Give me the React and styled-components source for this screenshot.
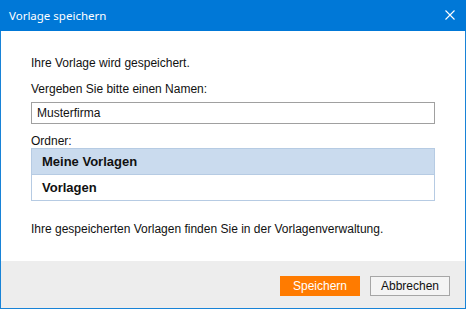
import React from 'react';
import styled, { createGlobalStyle } from 'styled-components';

const GlobalStyle = createGlobalStyle`
  html, body {
    margin: 0;
    padding: 0;
    background: #ffffff;
  }
`;

const Window = styled.div`
  width: 466px;
  height: 309px;
  box-sizing: border-box;
  border: 1px solid #1883d7;
  border-top: none;
  display: flex;
  flex-direction: column;
  font-family: 'Liberation Sans', Arial, sans-serif;
  color: #111;
`;

const TitleBar = styled.div`
  height: 31px;
  margin: 0 -1px;
  background: #0078d7;
  display: flex;
  align-items: center;
  justify-content: space-between;
  padding: 0 11px 0 9px;
`;

const Title = styled.span`
  font-family: 'Noto Sans', sans-serif;
  font-size: 11.5px;
  color: #ffffff;
`;

const CloseButton = styled.svg`
  width: 10px;
  height: 10px;
  margin-top: -2px;
`;

const Body = styled.div`
  height: 230px;
  box-sizing: border-box;
  padding: 25px 30px 0 30px;
  display: flex;
  flex-direction: column;
  background: #ffffff;
`;

const Text = styled.div`
  font-size: 12px;
  line-height: 14px;
  margin-top: ${p => p.$gap || 0}px;
`;

const Input = styled.div`
  margin-top: 6px;
  height: 22px;
  box-sizing: border-box;
  border: 1px solid #a0a0a0;
  font-size: 12px;
  display: flex;
  align-items: center;
  padding-left: 5px;
`;

const List = styled.div`
  border: 1px solid #b6cbe3;
  display: flex;
  flex-direction: column;
`;

const ListItem = styled.div`
  height: 25px;
  box-sizing: border-box;
  display: flex;
  align-items: center;
  padding-left: 10px;
  font-size: 13px;
  font-weight: bold;
  background: ${p => (p.$selected ? '#cadbee' : '#ffffff')};
  & + & {
    border-top: 1px solid #b6cbe3;
    height: 26px;
  }
`;

const Footer = styled.div`
  flex: 1;
  background: #ededed;
  display: flex;
  justify-content: flex-end;
  align-items: flex-start;
  gap: 10px;
  padding: 15px 15px 0 0;
`;

const Button = styled.button`
  width: 80px;
  height: 20px;
  box-sizing: border-box;
  padding: 0;
  font-family: 'Liberation Sans', Arial, sans-serif;
  font-size: 12px;
  border: 1px solid ${p => (p.$primary ? '#ff7b00' : '#a6a6a6')};
  background: ${p => (p.$primary ? '#ff7b00' : '#f4f4f4')};
  color: ${p => (p.$primary ? '#ffffff' : '#111')};
`;

export default function App() {
  return (
    <>
      <GlobalStyle />
      <Window>
        <TitleBar>
          <Title>Vorlage speichern</Title>
          <CloseButton viewBox="0 0 10 10">
            <path d="M0.5 0.5 L9.5 9.5 M9.5 0.5 L0.5 9.5" stroke="#ffffff" strokeWidth="1.1" fill="none" />
          </CloseButton>
        </TitleBar>
        <Body>
          <Text>Ihre Vorlage wird gespeichert.</Text>
          <Text $gap={12}>Vergeben Sie bitte einen Namen:</Text>
          <Input>Musterfirma</Input>
          <Text $gap={10}>Ordner:</Text>
          <List>
            <ListItem $selected>Meine Vorlagen</ListItem>
            <ListItem>Vorlagen</ListItem>
          </List>
          <Text $gap={21}>Ihre gespeicherten Vorlagen finden Sie in der Vorlagenverwaltung.</Text>
        </Body>
        <Footer>
          <Button $primary>Speichern</Button>
          <Button>Abbrechen</Button>
        </Footer>
      </Window>
    </>
  );
}
